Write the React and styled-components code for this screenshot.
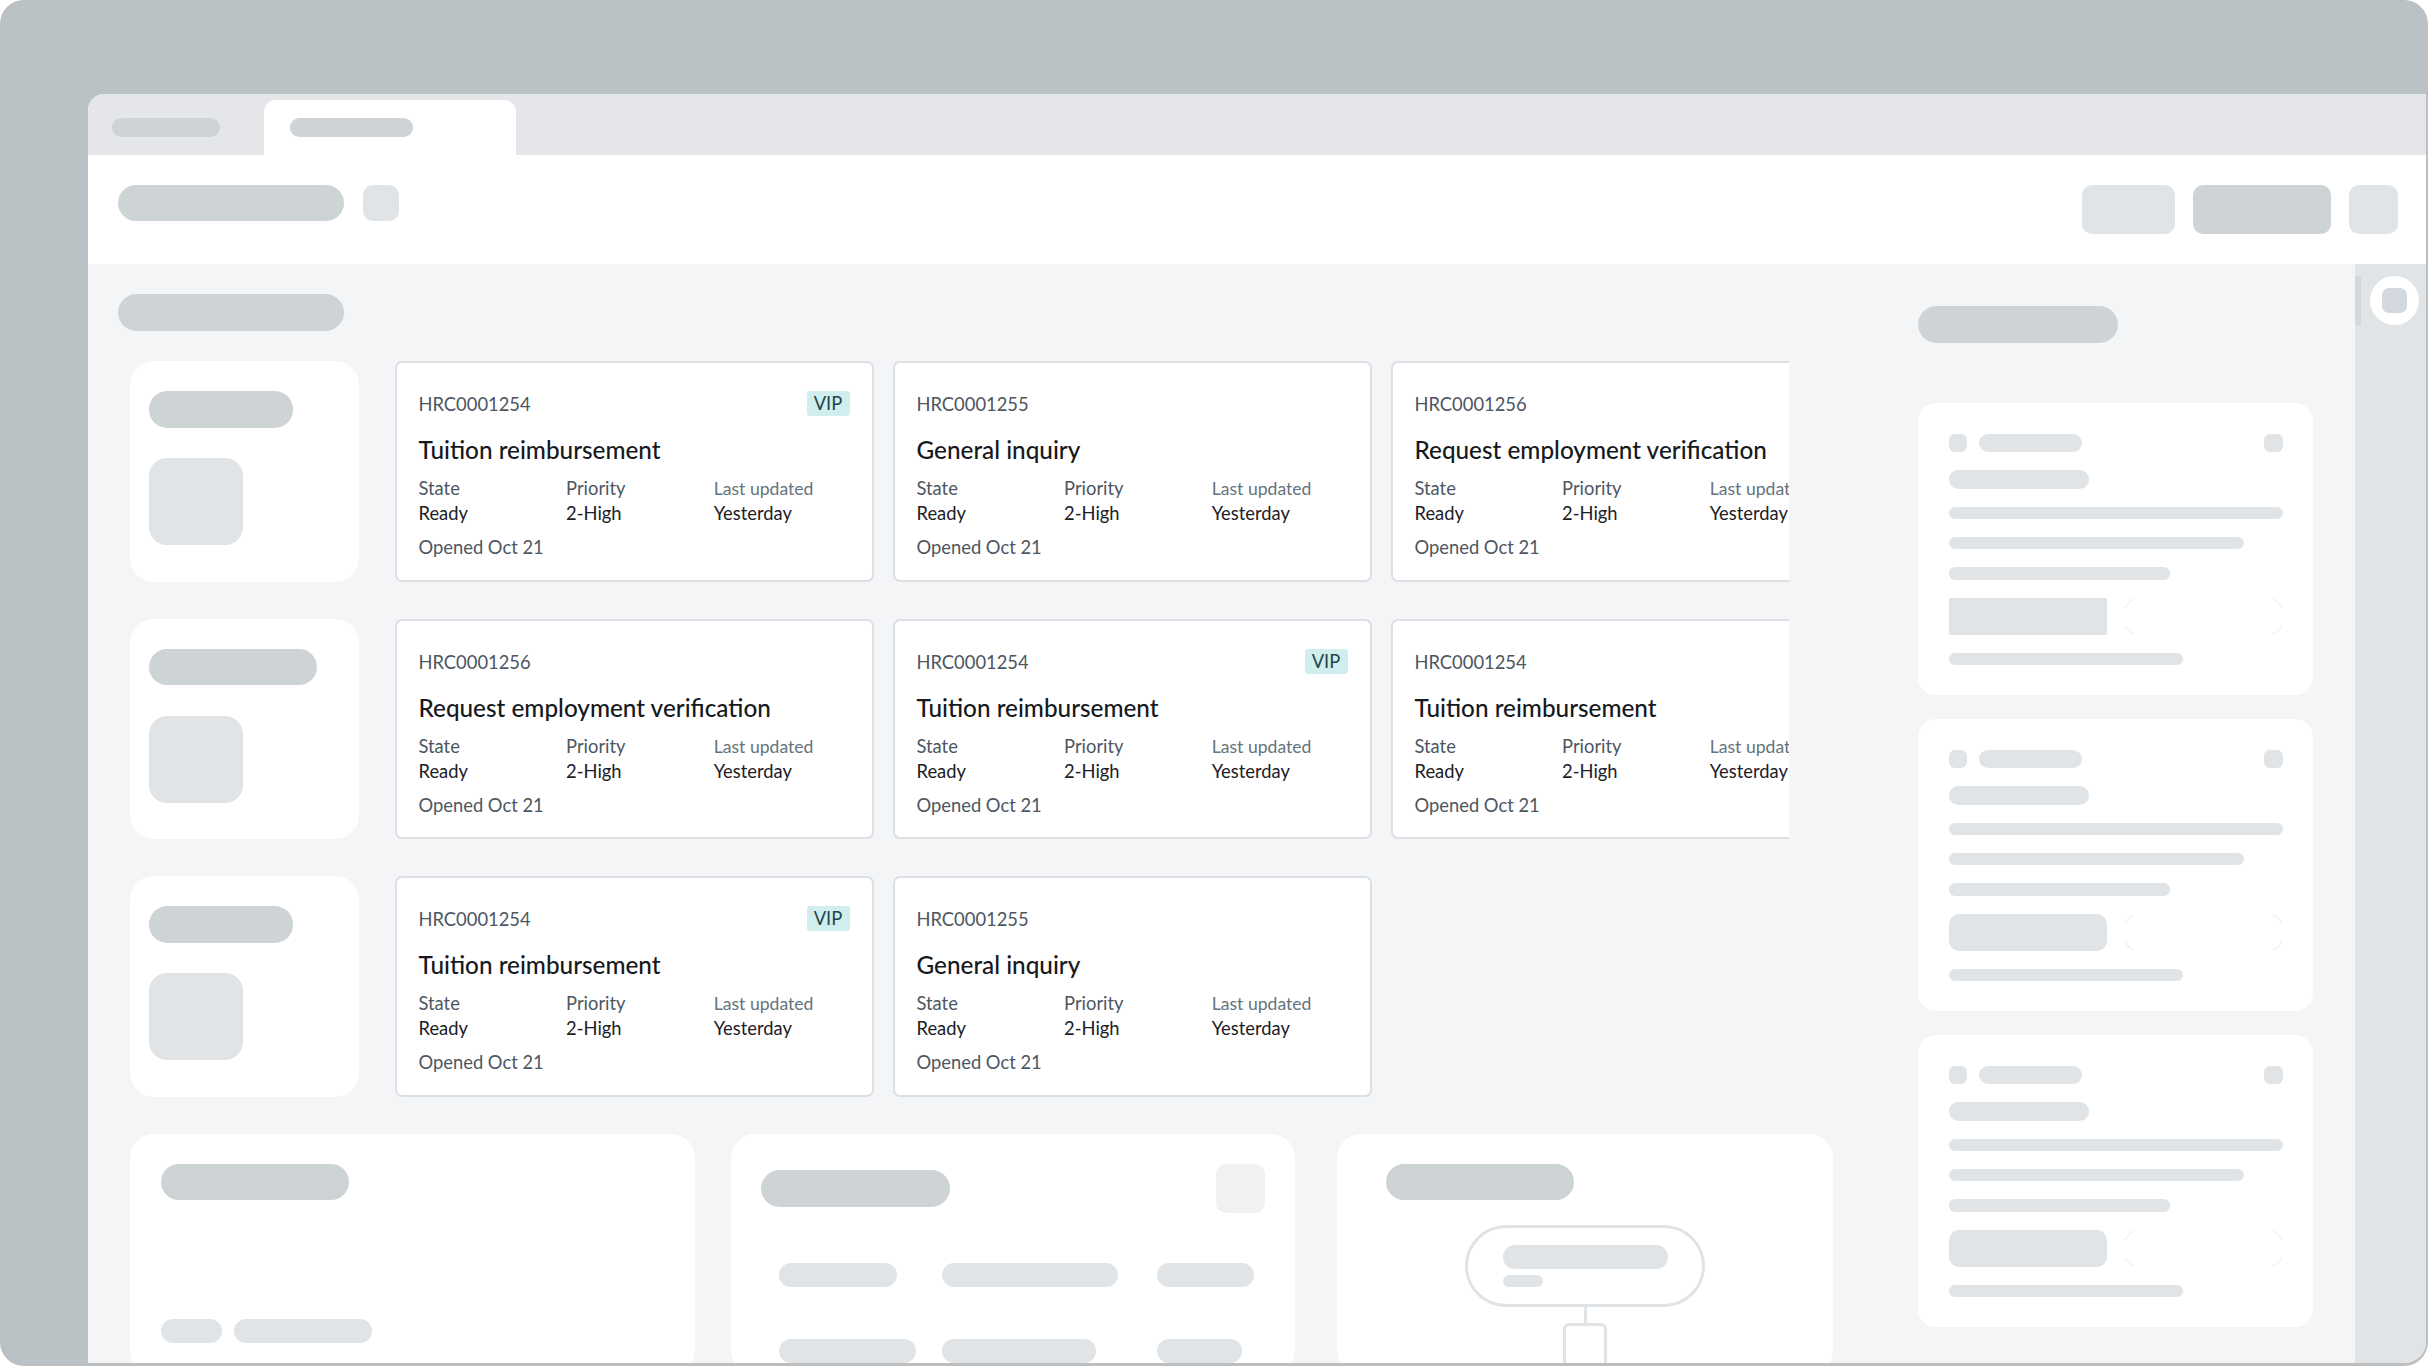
import React from 'react';
import styled, { createGlobalStyle } from 'styled-components';

const GlobalStyle = createGlobalStyle`
  html, body {
    margin: 0;
    padding: 0;
    background: #fff;
  }
  * {
    box-sizing: border-box;
  }
`;

const DARK = '#ced4d6';
const LIGHT = '#e0e4e7';

const Frame = styled.div`
  width: 2428px;
  height: 1366px;
  padding: 93px 0 0 86px;
  background: #bac2c5;
  border: solid #bcbebf;
  border-width: 1px 2px 3px 2px;
  border-radius: 24px;
  overflow: hidden;
  font-family: Lato, "Open Sans", sans-serif;
`;

const Window = styled.div`
  width: 2338px;
  height: 1269px;
  display: flex;
  flex-direction: column;
  border-top-left-radius: 16px;
  overflow: hidden;
  background: #f4f5f7;
`;

const TabBar = styled.div`
  flex: none;
  height: 61px;
  display: flex;
  align-items: flex-end;
  padding-left: 24px;
  background: #e4e6ea;
`;

const Tab = styled.div`
  height: 55px;
  padding-top: 18px;
  padding-left: ${p => (p.$active ? 26 : 0)}px;
  border-radius: 12px 12px 0 0;
  width: ${p => p.$width}px;
  background: ${p => (p.$active ? '#fff' : 'transparent')};
`;

const Pill = styled.div`
  flex: none;
  width: ${p => p.$w}px;
  height: ${p => p.$h || 37}px;
  border-radius: ${p => (p.$h || 37) / 2}px;
  background: ${p => (p.$light ? LIGHT : DARK)};
`;

const Chip = styled.div`
  flex: none;
  width: ${p => p.$w}px;
  height: ${p => p.$h || p.$w}px;
  border-radius: ${p => p.$r}px;
  background: ${p => p.$color || LIGHT};
`;

const Header = styled.div`
  flex: none;
  height: 109px;
  display: flex;
  align-items: flex-start;
  padding: 30px 28px 0 30px;
  background: #fff;
`;

const HeaderTitle = styled.div`
  display: flex;
  gap: 18.5px;
`;

const HeaderActions = styled.div`
  margin-left: auto;
  display: flex;
  gap: 18px;
`;

const Body = styled.div`
  flex: 1;
  min-height: 0;
  display: flex;
`;

const Main = styled.div`
  flex: none;
  width: 1830px;
  padding: 30px 0 0 30px;
  overflow: hidden;
`;

const CaseRows = styled.div`
  margin: 30.2px 0 0 12px;
  width: 1659px;
  display: flex;
  flex-direction: column;
  gap: 37px;
  overflow: hidden;
`;

const CaseRow = styled.div`
  display: flex;
  height: 220.5px;
`;

const SideCard = styled.div`
  flex: none;
  width: 228.5px;
  margin-right: 36px;
  padding: 30px 18.6px 0;
  display: flex;
  flex-direction: column;
  gap: 30.5px;
  border-radius: 24px;
  background: #fff;
`;

const Cases = styled.div`
  display: flex;
  gap: 19px;
`;

const Card = styled.div`
  flex: none;
  width: 479px;
  height: 220.5px;
  padding: 28.1px 22px 0;
  border: 2px solid #dcdfe3;
  border-radius: 7px;
  background: #fff;
  font-size: 18.35px;
  line-height: 25px;
`;

const CardTop = styled.div`
  display: flex;
  justify-content: space-between;
`;

const CaseId = styled.div`
  padding-top: 1px;
  color: #4d5661;
`;

const Vip = styled.div`
  height: 25px;
  width: 43px;
  text-align: center;
  line-height: 24px;
  border-radius: 3px;
  background: #d0eeee;
  color: #24444d;
`;

const CardTitle = styled.div`
  margin-top: 16.8px;
  font-size: 24.3px;
  line-height: 32px;
  font-weight: 500;
  color: #16191d;
  white-space: nowrap;
`;

const Fields = styled.div`
  margin-top: 10px;
  display: grid;
  grid-template-columns: repeat(3, 147.6px);
  white-space: nowrap;
`;

const FieldLabel = styled.div`
  color: #4d5661;
`;

const UpdatedLabel = styled(FieldLabel)`
  font-size: 17.6px;
  color: #66737c;
`;

const FieldValue = styled.div`
  color: #1c2026;
`;

const Opened = styled.div`
  margin-top: 9.2px;
  color: #4d5661;
`;

const Panels = styled.div`
  margin: 37px 0 0 12px;
  display: flex;
`;

const Panel = styled.div`
  flex: none;
  width: ${p => p.$w}px;
  height: 240px;
  margin-left: ${p => p.$offset || 0}px;
  padding: 30px ${p => p.$padX}px 0;
  border-radius: 24px;
  background: #fff;
`;

const ChipRow = styled.div`
  margin-top: 119px;
  display: flex;
  gap: 12.5px;
`;

const PanelHead = styled.div`
  display: flex;
  justify-content: space-between;
  align-items: center;
`;

const TableRows = styled.div`
  margin-top: 50px;
  padding-left: 18.5px;
  display: flex;
  flex-direction: column;
  gap: 52px;
`;

const TableRow = styled.div`
  display: grid;
  grid-template-columns: 162.5px 215.5px auto;
`;

const Tree = styled.div`
  margin-top: 25px;
  display: flex;
  flex-direction: column;
  align-items: center;
`;

const Node = styled.div`
  flex: none;
  width: 240px;
  height: 82px;
  padding: 17px 35px 0;
  border: 3px solid ${LIGHT};
  border-radius: 41px;
  display: flex;
  flex-direction: column;
  gap: 6px;
`;

const Connector = styled.div`
  flex: none;
  width: 3px;
  height: 16px;
  background: ${LIGHT};
`;

const LeafNode = styled.div`
  flex: none;
  width: 44px;
  height: 60px;
  border: 3px solid ${LIGHT};
  border-radius: 6px;
`;

const SideColumn = styled.div`
  flex: none;
  width: 395px;
  margin-right: 42px;
  padding-top: 42px;
`;

const Insights = styled.div`
  margin-top: 60px;
  display: flex;
  flex-direction: column;
  gap: 24px;
`;

const InsightCard = styled.div`
  height: 292px;
  padding: 30.5px;
  display: flex;
  flex-direction: column;
  gap: 18px;
  border-radius: 18px;
  background: #fff;
`;

const InsightTop = styled.div`
  display: flex;
  align-items: center;
  gap: 12px;
`;

const PushRight = styled.div`
  margin-left: auto;
`;

const InsightActions = styled.div`
  display: flex;
  justify-content: space-between;
`;

const PrimaryAction = styled.div`
  width: 158px;
  height: 37px;
  background: ${LIGHT};
  border-radius: ${p => (p.$square ? 0 : 10)}px;
`;

// outline button: only the four corner arcs show in the reference
const GhostAction = styled.div`
  position: relative;
  width: 159px;
  height: 37px;
  border: 1px solid #e9ebee;
  border-radius: 14px;

  &::before,
  &::after {
    content: '';
    position: absolute;
    background: #fff;
  }
  &::before {
    top: -1px;
    bottom: -1px;
    left: 9px;
    right: 9px;
  }
  &::after {
    top: 9px;
    bottom: 9px;
    left: -1px;
    right: -1px;
  }
`;

const Rail = styled.div`
  flex: none;
  width: 71px;
  padding-top: 12px;
  display: flex;
  align-items: flex-start;
  gap: 9px;
  background: ${LIGHT};
`;

const RailMarker = styled.div`
  width: 6px;
  height: 49px;
  background: #d3d7de;
`;

const RailButton = styled.div`
  width: 49px;
  height: 49px;
  display: flex;
  align-items: center;
  justify-content: center;
  border-radius: 50%;
  background: #fff;
`;

const TUITION = { id: 'HRC0001254', title: 'Tuition reimbursement' };
const INQUIRY = { id: 'HRC0001255', title: 'General inquiry' };
const REQUEST = { id: 'HRC0001256', title: 'Request employment verification' };

const rows = [
  {
    pill: 144,
    cases: [{ ...TUITION, vip: true }, INQUIRY, REQUEST],
  },
  {
    pill: 168,
    cases: [REQUEST, { ...TUITION, vip: true }, TUITION],
  },
  {
    pill: 144,
    cases: [{ ...TUITION, vip: true }, INQUIRY],
  },
];

const CaseCard = ({ id, title, vip }) => (
  <Card>
    <CardTop>
      <CaseId>{id}</CaseId>
      {vip && <Vip>VIP</Vip>}
    </CardTop>
    <CardTitle>{title}</CardTitle>
    <Fields>
      <FieldLabel>State</FieldLabel>
      <FieldLabel>Priority</FieldLabel>
      <UpdatedLabel>Last updated</UpdatedLabel>
      <FieldValue>Ready</FieldValue>
      <FieldValue>2-High</FieldValue>
      <FieldValue>Yesterday</FieldValue>
    </Fields>
    <Opened>Opened Oct 21</Opened>
  </Card>
);

const Insight = ({ squareAction }) => (
  <InsightCard>
    <InsightTop>
      <Chip $w={18.5} $r={6} />
      <Pill $w={103} $h={18.5} $light />
      <PushRight>
        <Chip $w={18.5} $r={6} />
      </PushRight>
    </InsightTop>
    <Pill $w={140} $h={18.5} $light />
    <Pill $w={334} $h={12.4} $light />
    <Pill $w={295} $h={12.4} $light />
    <Pill $w={221} $h={12.4} $light />
    <InsightActions>
      <PrimaryAction $square={squareAction} />
      <GhostAction />
    </InsightActions>
    <Pill $w={234} $h={12.4} $light />
  </InsightCard>
);

const App = () => (
  <>
    <GlobalStyle />
    <Frame>
      <Window>
        <TabBar>
          <Tab $width={152}>
            <Pill $w={108} $h={18.5} />
          </Tab>
          <Tab $width={252} $active>
            <Pill $w={123} $h={18.5} />
          </Tab>
        </TabBar>
        <Header>
          <HeaderTitle>
            <Pill $w={226} $h={36} />
            <Chip $w={36} $r={10} />
          </HeaderTitle>
          <HeaderActions>
            <Chip $w={93} $h={49} $r={10} />
            <Chip $w={138} $h={49} $r={10} $color={DARK} />
            <Chip $w={49} $r={10} />
          </HeaderActions>
        </Header>
        <Body>
          <Main>
            <Pill $w={226} />
            <CaseRows>
              {rows.map((row, i) => (
                <CaseRow key={i}>
                  <SideCard>
                    <Pill $w={row.pill} $h={36.5} />
                    <Chip $w={94} $h={87} $r={18} />
                  </SideCard>
                  <Cases>
                    {row.cases.map((c, j) => (
                      <CaseCard key={j} {...c} />
                    ))}
                  </Cases>
                </CaseRow>
              ))}
            </CaseRows>
            <Panels>
              <Panel $w={564.5} $padX={31}>
                <Pill $w={188} $h={36.5} />
                <ChipRow>
                  <Pill $w={60.5} $h={24} $light />
                  <Pill $w={138} $h={24} $light />
                </ChipRow>
              </Panel>
              <Panel $w={564} $offset={36} $padX={30}>
                <PanelHead>
                  <Pill $w={189} $h={37} />
                  <Chip $w={49} $r={10} $color="#f0f1f2" />
                </PanelHead>
                <TableRows>
                  <TableRow>
                    <Pill $w={117.5} $h={24} $light />
                    <Pill $w={176.5} $h={24} $light />
                    <Pill $w={97} $h={24} $light />
                  </TableRow>
                  <TableRow>
                    <Pill $w={137} $h={24} $light />
                    <Pill $w={154.5} $h={24} $light />
                    <Pill $w={85} $h={24} $light />
                  </TableRow>
                </TableRows>
              </Panel>
              <Panel $w={496} $offset={42.5} $padX={49}>
                <Pill $w={188} $h={36.5} />
                <Tree>
                  <Node>
                    <Pill $w={164.5} $h={24} $light />
                    <Pill $w={40} $h={12} $light />
                  </Node>
                  <Connector />
                  <LeafNode />
                </Tree>
              </Panel>
            </Panels>
          </Main>
          <SideColumn>
            <Pill $w={200} />
            <Insights>
              <Insight squareAction />
              <Insight />
              <Insight />
            </Insights>
          </SideColumn>
          <Rail>
            <RailMarker />
            <RailButton>
              <Chip $w={25} $r={7} $color="#d3d7de" />
            </RailButton>
          </Rail>
        </Body>
      </Window>
    </Frame>
  </>
);

export default App;
